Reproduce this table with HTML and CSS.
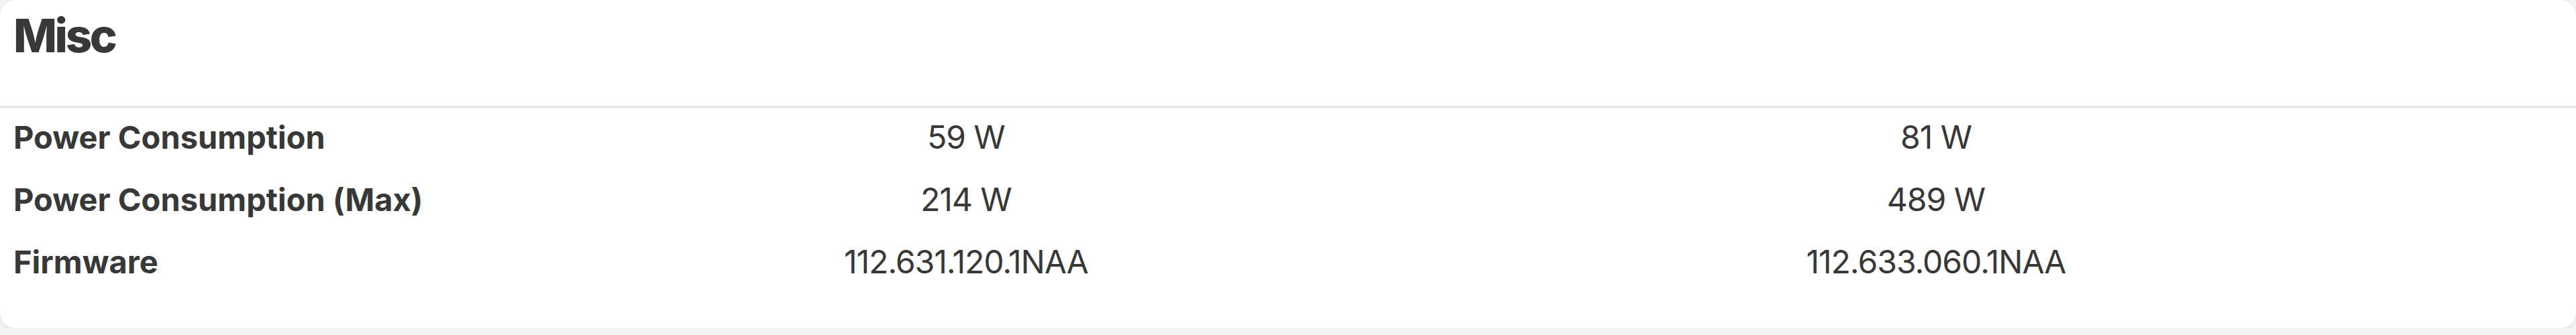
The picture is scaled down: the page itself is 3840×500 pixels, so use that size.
FILE: index.html
```html
<!DOCTYPE html>
<html lang="en">
<head>
    <meta charset="UTF-8">
    <title>Misc</title>
    <link rel="stylesheet" href="styles.css">
</head>
<body>
    <!-- spec card -->
    <section class="card">
        <header class="card-head">
            <h2>Misc</h2>
        </header>

        <div class="spec-row">
            <div class="spec-label">Power Consumption</div>
            <div class="spec-value">59 W</div>
            <div class="spec-value">81 W</div>
        </div>
        <div class="spec-row">
            <div class="spec-label">Power Consumption (Max)</div>
            <div class="spec-value">214 W</div>
            <div class="spec-value">489 W</div>
        </div>
        <div class="spec-row">
            <div class="spec-label">Firmware</div>
            <div class="spec-value">112.631.120.1NAA</div>
            <div class="spec-value">112.633.060.1NAA</div>
        </div>
    </section>
</body>
</html>
```
FILE: styles.css
```css
/* page */
body {
    margin: 0;
    background-color: #f4f4f4;
    font-family: Inter, "Liberation Sans", sans-serif;
    color: #383838;
}

/* card */
.card {
    background-color: #fff;
    height: 490px;
    border-radius: 24px;
    box-shadow: 0 3px 8px rgba(0, 0, 0, 0.07);
    overflow: hidden;
}

.card-head {
    height: 161px;
    border-bottom: 3px solid #e4e4e4;
    box-sizing: border-box;
    padding: 0 20px;
}

.card-head h2 {
    margin: 0;
    font-size: 69px;
    font-weight: 800;
    line-height: 106px;
    letter-spacing: -3.5px;
}

/* rows */
.spec-row {
    display: grid;
    grid-template-columns: 697px 1446px 1446px;
    padding-left: 20px;
    height: 93px;
    line-height: 88px;
}

.spec-label {
    font-size: 47px;
    font-weight: 700;
}

.spec-value {
    font-size: 48px;
    text-align: center;
    letter-spacing: -1px;
}
```
